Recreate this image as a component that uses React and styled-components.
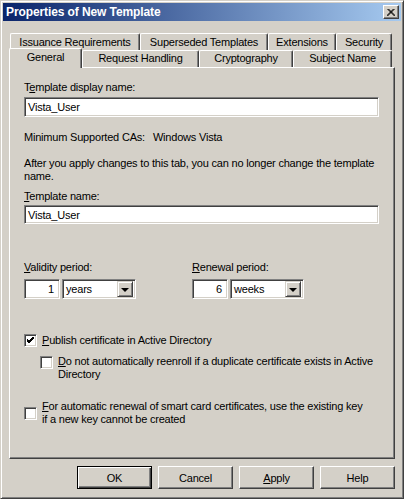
import React from 'react'
import styled, { createGlobalStyle } from 'styled-components'

const face = '#d4d0c8'
const shadow = '#808080'
const dark = '#404040'

const Global = createGlobalStyle`
  html, body { margin: 0; padding: 0; background: ${face}; }
  body {
    font-family: "Liberation Sans", Arial, sans-serif;
    font-size: 11px;
    letter-spacing: -0.2px;
    color: #000;
  }
`

const Window = styled.div`
  width: 404px;
  height: 499px;
  box-sizing: border-box;
  background: ${face};
  border: 1px solid;
  border-color: ${face} ${dark} ${dark} ${face};
  box-shadow: inset 1px 1px 0 #fff, inset -1px -1px 0 ${shadow};
  padding: 2px;
  display: flex;
  flex-direction: column;
`

const TitleBar = styled.div`
  height: 18px;
  display: flex;
  align-items: center;
  justify-content: space-between;
  padding: 0 2px 0 3px;
  background: linear-gradient(to right, #0a246a, #a6caf0);
`

const Title = styled.span`
  color: #fff;
  font-weight: bold;
  font-size: 12px;
  letter-spacing: -0.1px;
`

const CloseBox = styled.div`
  width: 16px;
  height: 14px;
  box-sizing: border-box;
  background: ${face};
  border: 1px solid;
  border-color: #fff ${dark} ${dark} #fff;
  box-shadow: inset -1px -1px 0 ${shadow};
  display: flex;
  align-items: center;
  justify-content: center;
`

const Tabs = styled.div`
  margin: 10px 9px 0 6px;
  display: flex;
  flex-direction: column;
`

const TabRow = styled.div`
  display: flex;
  height: ${({ h }) => h}px;
  padding-left: ${({ indent }) => indent || 0}px;
  align-items: flex-end;
`

const Tab = styled.div`
  width: ${({ w }) => w}px;
  height: ${({ active }) => (active ? 20 : 17)}px;
  box-sizing: border-box;
  flex-shrink: 0;
  display: flex;
  align-items: ${({ back }) => (back ? 'center' : 'flex-start')};
  justify-content: center;
  padding-top: ${({ back, active }) => (back ? 0 : active ? 2 : 1)}px;
  background: ${face};
  border-top: 1px solid #fff;
  border-left: 1px solid #fff;
  border-right: 1px solid ${dark};
  border-radius: 2px 2px 0 0;
  box-shadow: inset -1px 0 0 ${shadow};
  position: relative;
  z-index: ${({ active }) => (active ? 2 : 1)};
  margin-bottom: ${({ active }) => (active ? -1 : 0)}px;
  white-space: nowrap;
`

const Panel = styled.div`
  flex: 1;
  margin: 0 6px 0 6px;
  box-sizing: border-box;
  border: 1px solid;
  border-color: #fff ${dark} ${dark} #fff;
  box-shadow: inset -1px -1px 0 ${shadow};
  padding: 13px 15px 0 14px;
  display: flex;
  flex-direction: column;
`

const Label = styled.div`
  line-height: 13px;
  margin-top: ${({ mt }) => mt || 0}px;
  white-space: nowrap;
`

const Key = styled.span`
  text-decoration: underline;
  text-underline-offset: 1px;
`

const Field = styled.div`
  height: ${({ h }) => h || 20}px;
  width: ${({ w }) => (w ? `${w}px` : 'auto')};
  margin-top: ${({ mt }) => mt || 0}px;
  box-sizing: border-box;
  background: #fff;
  border: 1px solid;
  border-color: ${shadow} #fff #fff ${shadow};
  box-shadow: inset 1px 1px 0 ${dark}, inset -1px -1px 0 ${face};
  display: flex;
  align-items: center;
  justify-content: ${({ right }) => (right ? 'flex-end' : 'flex-start')};
  padding: 0 ${({ right }) => (right ? 5 : 2)}px 0 3px;
  flex-shrink: 0;
`

const InfoLine = styled.div`
  display: flex;
  gap: 8px;
  line-height: 13px;
  margin-top: 14px;
`

const Para = styled.div`
  line-height: 13px;
  margin-top: 13px;
  white-space: nowrap;
`

const PeriodGrid = styled.div`
  display: grid;
  grid-template-columns: 168px 1fr;
  margin-top: 37px;
`

const PeriodGroup = styled.div`
  display: flex;
  flex-direction: column;
`

const PeriodInputs = styled.div`
  display: flex;
  gap: 2px;
  margin-top: 5px;
`

const Combo = styled(Field)`
  justify-content: space-between;
  padding: 0 2px 0 3px;
`

const ArrowBtn = styled.div`
  width: 16px;
  height: 16px;
  box-sizing: border-box;
  background: ${face};
  border: 1px solid;
  border-color: ${face} ${dark} ${dark} ${face};
  box-shadow: inset 1px 1px 0 #fff, inset -1px -1px 0 ${shadow};
  display: flex;
  align-items: center;
  justify-content: center;
`

const Arrow = styled.div`
  width: 0;
  height: 0;
  border-left: 4px solid transparent;
  border-right: 4px solid transparent;
  border-top: 4px solid #000;
  margin-top: 1px;
`

const CheckRow = styled.div`
  display: flex;
  align-items: ${({ center }) => (center ? 'center' : 'flex-start')};
  gap: 5px;
  margin-top: ${({ mt }) => mt || 0}px;
  margin-left: ${({ indent }) => indent || 0}px;
`

const Box = styled.div`
  width: 13px;
  height: 13px;
  box-sizing: border-box;
  flex-shrink: 0;
  background: #fff;
  border: 1px solid;
  border-color: ${shadow} #fff #fff ${shadow};
  box-shadow: inset 1px 1px 0 ${dark}, inset -1px -1px 0 ${face};
  margin-top: ${({ mt }) => mt || 0}px;
  display: flex;
  align-items: center;
  justify-content: center;
`

const CheckText = styled.div`
  line-height: 13px;
  white-space: nowrap;
`

const Buttons = styled.div`
  display: flex;
  justify-content: flex-end;
  gap: 6px;
  margin: 7px 6px 7px 0;
`

const Button = styled.div`
  width: 75px;
  height: 23px;
  box-sizing: border-box;
  background: ${face};
  border: 1px solid;
  border-color: ${({ def }) => (def ? '#000' : `#fff ${dark} ${dark} #fff`)};
  box-shadow: ${({ def }) =>
    def
      ? `inset 1px 1px 0 #fff, inset -1px -1px 0 ${dark}, inset -2px -2px 0 ${shadow}`
      : `inset -1px -1px 0 ${shadow}`};
  display: flex;
  align-items: center;
  justify-content: center;
`

const Check = ({ checked, mt }) => (
  <Box mt={mt}>
    {checked && (
      <svg width="7" height="7" viewBox="0 0 7 7">
        <path d="M0 2 L2 4 L7 -1 M0 3 L2 5 L7 0 M0 4 L2 6 L7 1" stroke="#000" strokeWidth="1" fill="none" />
      </svg>
    )}
  </Box>
)

const Period = ({ label, k, value, unit }) => (
  <PeriodGroup>
    <Label><Key>{k}</Key>{label}</Label>
    <PeriodInputs>
      <Field w={36} right>{value}</Field>
      <Combo w={74}>
        {unit}
        <ArrowBtn><Arrow /></ArrowBtn>
      </Combo>
    </PeriodInputs>
  </PeriodGroup>
)

const backTabs = [
  ['Issuance Requirements', 130],
  ['Superseded Templates', 128],
  ['Extensions', 68],
  ['Security', 56],
]
const frontTabs = [
  ['General', 73, true],
  ['Request Handling', 117],
  ['Cryptography', 94],
  ['Subject Name', 99],
]

export default function App() {
  return (
    <>
      <Global />
      <Window>
        <TitleBar>
          <Title>Properties of New Template</Title>
          <CloseBox>
            <svg width="8" height="7" viewBox="0 0 8 7">
              <path d="M0.5 0 L7.5 7 M1.5 0 L8.5 7 M7.5 0 L0.5 7 M6.5 0 L-0.5 7" stroke="#000" strokeWidth="1" />
            </svg>
          </CloseBox>
        </TitleBar>

        <Tabs>
          <TabRow h={19} indent={1}>
            {backTabs.map(([t, w]) => <Tab key={t} w={w} back>{t}</Tab>)}
          </TabRow>
          <TabRow h={17}>
            {frontTabs.map(([t, w, a]) => <Tab key={t} w={w} active={a}>{t}</Tab>)}
          </TabRow>
        </Tabs>

        <Panel>
          <Label>T<Key>e</Key>mplate display name:</Label>
          <Field mt={3}>Vista_User</Field>

          <InfoLine>
            <span>Minimum Supported CAs:</span>
            <span>Windows Vista</span>
          </InfoLine>

          <Para>
            After you apply changes to this tab, you can no longer change the template
            <br />
            name.
          </Para>

          <Label mt={7}><Key>T</Key>emplate name:</Label>
          <Field mt={2} h={19}>Vista_User</Field>

          <PeriodGrid>
            <Period k="V" label="alidity period:" value="1" unit="years" />
            <Period k="R" label="enewal period:" value="6" unit="weeks" />
          </PeriodGrid>

          <CheckRow mt={35} center>
            <Check checked />
            <CheckText><Key>P</Key>ublish certificate in Active Directory</CheckText>
          </CheckRow>

          <CheckRow mt={8} indent={16}>
            <Check mt={1} />
            <CheckText>
              <Key>D</Key>o not automatically reenroll if a duplicate certificate exists in Active
              <br />
              Directory
            </CheckText>
          </CheckRow>

          <CheckRow mt={19} center>
            <Check />
            <CheckText>
              <Key>F</Key>or automatic renewal of smart card certificates, use the existing key
              <br />
              if a new key cannot be created
            </CheckText>
          </CheckRow>
        </Panel>

        <Buttons>
          <Button def>OK</Button>
          <Button>Cancel</Button>
          <Button><Key>A</Key>pply</Button>
          <Button>Help</Button>
        </Buttons>
      </Window>
    </>
  )
}
